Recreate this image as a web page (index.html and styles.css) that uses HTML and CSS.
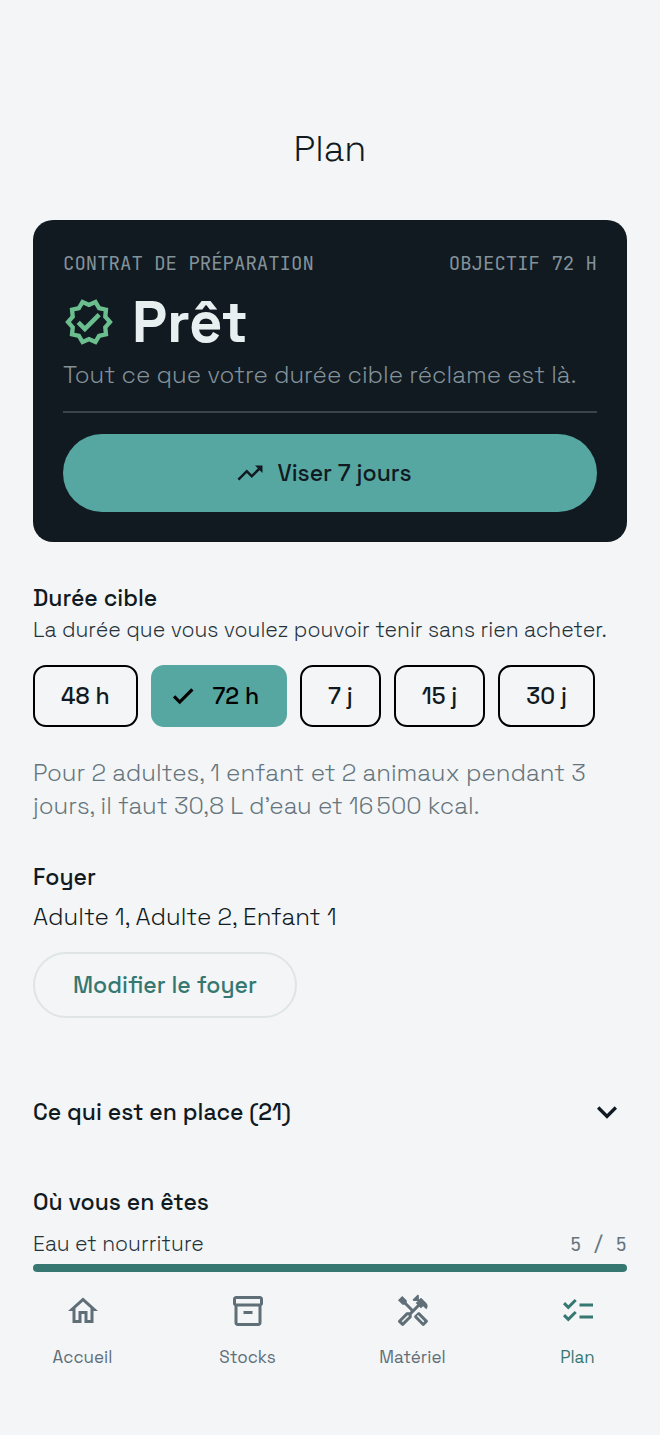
FILE: index.html
```html
<!DOCTYPE html>
<html lang="fr">
<head>
    <meta charset="UTF-8">
    <meta name="viewport" content="width=device-width, initial-scale=1.0">
    <title>Plan</title>
    <link rel="stylesheet" href="styles.css">
</head>
<body>
    <header class="topbar">
        <h1>Plan</h1>
    </header>

    <main>
        <section class="card">
            <div class="card-top">
                <span>CONTRAT DE PRÉPARATION</span>
                <span>OBJECTIF 72 H</span>
            </div>
            <div class="status">
                <svg class="icon-status" viewBox="0 0 24 24" aria-hidden="true">
                    <path fill-rule="evenodd" d="M23 11.99l-2.44-2.79.34-3.69-3.61-.82L15.4 1.5 12 2.96 8.6 1.5 6.71 4.69 3.1 5.5l.34 3.7L1 11.99l2.44 2.79-.34 3.7 3.61.82 1.89 3.2 3.4-1.47 3.4 1.46 1.89-3.19 3.61-.82-.34-3.69 2.44-2.8zm-3.95 1.48l-.56.65.08.85.18 1.95-1.9.43-.84.19-.44.74-.99 1.68-1.78-.77-.8-.34-.79.34-1.78.77-.99-1.67-.44-.74-.84-.19-1.9-.43.18-1.96.08-.85-.56-.65-1.29-1.47 1.29-1.48.56-.65-.09-.86-.18-1.94 1.9-.43.84-.19.44-.74.99-1.68 1.78.77.8.34.79-.34 1.78-.77.99 1.68.44.74.84.19 1.9.43-.18 1.95-.08.85.56.65 1.29 1.47-1.28 1.48z"/>
                    <path d="M10.09 13.75l-2.32-2.33-1.48 1.49 3.8 3.81 7.34-7.36-1.48-1.49z"/>
                </svg>
                <h2>Prêt</h2>
            </div>
            <p class="status-text">Tout ce que votre durée cible réclame est là.</p>
            <hr>
            <button type="button" class="btn-main">
                <svg class="icon-trend" viewBox="0 0 24 24" aria-hidden="true"><path d="M16 6l2.29 2.29-4.88 4.88-4-4L2 16.59 3.41 18l6-6 4 4 6.3-6.29L22 12V6z"/></svg>
                Viser 7 jours
            </button>
        </section>

        <section class="duree">
            <h3 id="duree-titre">Durée cible</h3>
            <p class="small">La durée que vous voulez pouvoir tenir sans rien acheter.</p>
            <div class="chips" role="radiogroup" aria-labelledby="duree-titre">
                <label class="chip"><input type="radio" name="duree" value="48h">48 h</label>
                <label class="chip">
                    <input type="radio" name="duree" value="72h" checked>
                    <svg class="icon-check" viewBox="0 0 24 24" aria-hidden="true"><path d="M9 16.17L4.83 12l-1.42 1.41L9 19 21 7l-1.41-1.41z"/></svg>
                    72 h
                </label>
                <label class="chip"><input type="radio" name="duree" value="7j">7 j</label>
                <label class="chip"><input type="radio" name="duree" value="15j">15 j</label>
                <label class="chip"><input type="radio" name="duree" value="30j">30 j</label>
            </div>
            <p class="besoin">Pour 2 adultes, 1 enfant et 2 animaux pendant 3 jours, il faut 30,8 L d’eau et 16&#8239;500 kcal.</p>
        </section>

        <section class="foyer">
            <h3>Foyer</h3>
            <p>Adulte 1, Adulte 2, Enfant 1</p>
            <button type="button" class="btn-outline">Modifier le foyer</button>
        </section>

        <button type="button" class="accordion" aria-expanded="false">
            Ce qui est en place (21)
            <svg class="icon-arrow" viewBox="0 0 24 24" aria-hidden="true"><path d="M7.41 8.59L12 13.17l4.59-4.58L18 10l-6 6-6-6z"/></svg>
        </button>

        <section class="avancement">
            <h3>Où vous en êtes</h3>
            <div class="line">
                <label class="small" for="eau">Eau et nourriture</label>
                <span class="count">5 / 5</span>
            </div>
            <progress id="eau" value="5" max="5"></progress>
        </section>
    </main>

    <nav class="tabs">
        <a href="#accueil">
            <svg viewBox="0 0 24 24" aria-hidden="true"><path d="M12 5.69l5 4.5V18h-2v-6H9v6H7v-7.81l5-4.5M12 3L2 12h3v8h6v-6h2v6h6v-8h3L12 3z"/></svg>
            Accueil
        </a>
        <a href="#stocks">
            <svg viewBox="0 0 24 24" aria-hidden="true"><path d="M20 2H4c-1 0-2 .9-2 2v3.01c0 .72.43 1.34 1 1.69V20c0 1.1 1.1 2 2 2h14c.9 0 2-.9 2-2V8.7c.57-.35 1-.97 1-1.69V4c0-1.1-1-2-2-2zm-1 18H5V9h14v11zm1-13H4V4h16v3z"/><path d="M9 12h6v2H9z"/></svg>
            Stocks
        </a>
        <a href="#materiel">
            <svg viewBox="0 0 24 24" aria-hidden="true"><path d="M21.67 18.17l-5.3-5.3h-.99l-2.54 2.54v.99l5.3 5.3c.39.39 1.02.39 1.41 0l2.12-2.12c.39-.38.39-1.02 0-1.41zm-2.83 1.42l-4.24-4.24.71-.71 4.24 4.24-.71.71z"/><path d="M17.34 10.19l1.41-1.41 2.12 2.12c1.17-1.17 1.17-3.07 0-4.24l-3.54-3.54-1.41 1.41V1.71L15.22 1l-3.54 3.54.71.71h2.83l-1.41 1.41 1.06 1.06-2.89 2.89-4.13-4.13V5.06L4.83 2.04 2 4.87 5.03 7.9h1.41l4.13 4.13-.85.85H7.6l-5.3 5.3c-.39.39-.39 1.02 0 1.41l2.12 2.12c.39.39 1.02.39 1.41 0l5.3-5.3v-2.12l5.15-5.15 1.05 1.05zm-7.98 5.15l-4.24 4.24-.71-.71 4.24-4.24.71.71z"/></svg>
            Matériel
        </a>
        <a href="#plan" class="active" aria-current="page">
            <svg viewBox="0 0 24 24" aria-hidden="true"><path d="M22 7h-9v2h9V7zm0 8h-9v2h9v-2zM5.54 11L2 7.46l1.41-1.41 2.12 2.12 4.24-4.24 1.41 1.41L5.54 11zm0 8L2 15.46l1.41-1.41 2.12 2.12 4.24-4.24 1.41 1.41L5.54 19z"/></svg>
            Plan
        </a>
    </nav>
</body>
</html>
```

FILE: styles.css
```css
*{
    margin: 0;
    padding: 0;
    box-sizing: border-box;
}

body{
    background-color: #f3f5f7;
    color: #111a21;
    font-family: "Space Grotesk", Inter, sans-serif;
    font-size: 24px;
    font-weight: 300;
    line-height: 32px;
}

button{
    font: inherit;
    font-size: 23px;
    font-weight: 500;
    color: inherit;
    background: none;
    border: 0;
    cursor: pointer;
}

svg{
    fill: currentColor;
    flex: none;
}

h3{
    font-size: 23px;
    font-weight: 500;
}

.topbar{
    padding: 125px 33px 47px;
    text-align: center;
}

.topbar h1{
    font-size: 36px;
    font-weight: 300;
    line-height: 48px;
}

main{
    padding: 0 33px;
}

/* carte du contrat */
.card{
    background-color: #111a21;
    border-radius: 20px;
    padding: 30px;
}

.card-top{
    display: flex;
    justify-content: space-between;
    color: #84929a;
    font-family: "JetBrains Mono", "DejaVu Sans Mono", monospace;
    font-size: 19px;
    font-weight: 400;
    line-height: 28px;
}

.status{
    display: flex;
    align-items: center;
    gap: 17px;
    margin-top: 12px;
    color: #e8eff0;
}

.status h2{
    font-size: 58px;
    font-weight: 700;
    line-height: 64px;
}

.icon-status{
    width: 52px;
    height: 52px;
    color: #6bbf8e;
}

.status-text{
    margin-top: 5px;
    color: #84929a;
}

.card hr{
    border: 0;
    height: 2px;
    margin: 20px 0 21px;
    background-color: #3a434b;
}

.btn-main{
    display: flex;
    align-items: center;
    justify-content: center;
    gap: 12px;
    width: 100%;
    height: 78px;
    padding-right: 13px;
    border-radius: 39px;
    background-color: #56a7a1;
}

.icon-trend{
    width: 30px;
    height: 30px;
}

/* duree cible */
.duree{
    margin-top: 40px;
}

.small{
    font-size: 21px;
    color: #26323a;
}

.chips{
    display: flex;
    flex-wrap: wrap;
    gap: 13px;
    margin-top: 19px;
}

.chip{
    display: flex;
    align-items: center;
    height: 62px;
    padding: 0 26px;
    border: 2px solid #000;
    border-radius: 13px;
    font-size: 23px;
    font-weight: 500;
    cursor: pointer;
}

.chip input{
    appearance: none;
    width: 0;
    height: 0;
}

.chip:has(input:checked){
    gap: 17px;
    padding: 0 26px 0 0;
    border-color: #56a7a1;
    background-color: #56a7a1;
    color: #000;
}

.icon-check{
    width: 26px;
    height: 26px;
    stroke: currentColor;
}

.besoin{
    margin-top: 29px;
    line-height: 33px;
    color: #66757d;
}

/* foyer */
.foyer{
    margin-top: 39px;
}

.foyer p{
    margin-top: 8px;
}

.btn-outline{
    height: 66px;
    margin-top: 19px;
    padding: 0 38px;
    border: 2px solid #dfe5e6;
    border-radius: 33px;
    color: #367871;
}

.accordion{
    display: flex;
    align-items: center;
    justify-content: space-between;
    width: 100%;
    height: 40px;
    margin-top: 74px;
    text-align: left;
}

.icon-arrow{
    width: 40px;
    height: 40px;
}

/* avancement */
.avancement{
    margin-top: 54px;
}

.line{
    display: flex;
    align-items: baseline;
    justify-content: space-between;
    margin-top: 10px;
}

.count{
    color: #66757d;
    font-family: "JetBrains Mono", "DejaVu Sans Mono", monospace;
    font-size: 19px;
    font-weight: 400;
}

progress{
    appearance: none;
    display: block;
    width: 100%;
    height: 8px;
    margin-top: 3px;
    border: 0;
    border-radius: 4px;
    overflow: hidden;
}

progress::-webkit-progress-bar{
    background-color: #dfe5e6;
}

progress::-webkit-progress-value{
    background-color: #367871;
}

/* onglets du bas */
.tabs{
    display: grid;
    grid-template-columns: repeat(4, 1fr);
    padding: 21px 0 60px;
}

.tabs a{
    display: flex;
    flex-direction: column;
    align-items: center;
    gap: 16px;
    color: #5f6e77;
    font-size: 17px;
    font-weight: 400;
    line-height: 24px;
    text-decoration: none;
}

.tabs svg{
    width: 36px;
    height: 36px;
}

.tabs .active{
    color: #367871;
}
```
